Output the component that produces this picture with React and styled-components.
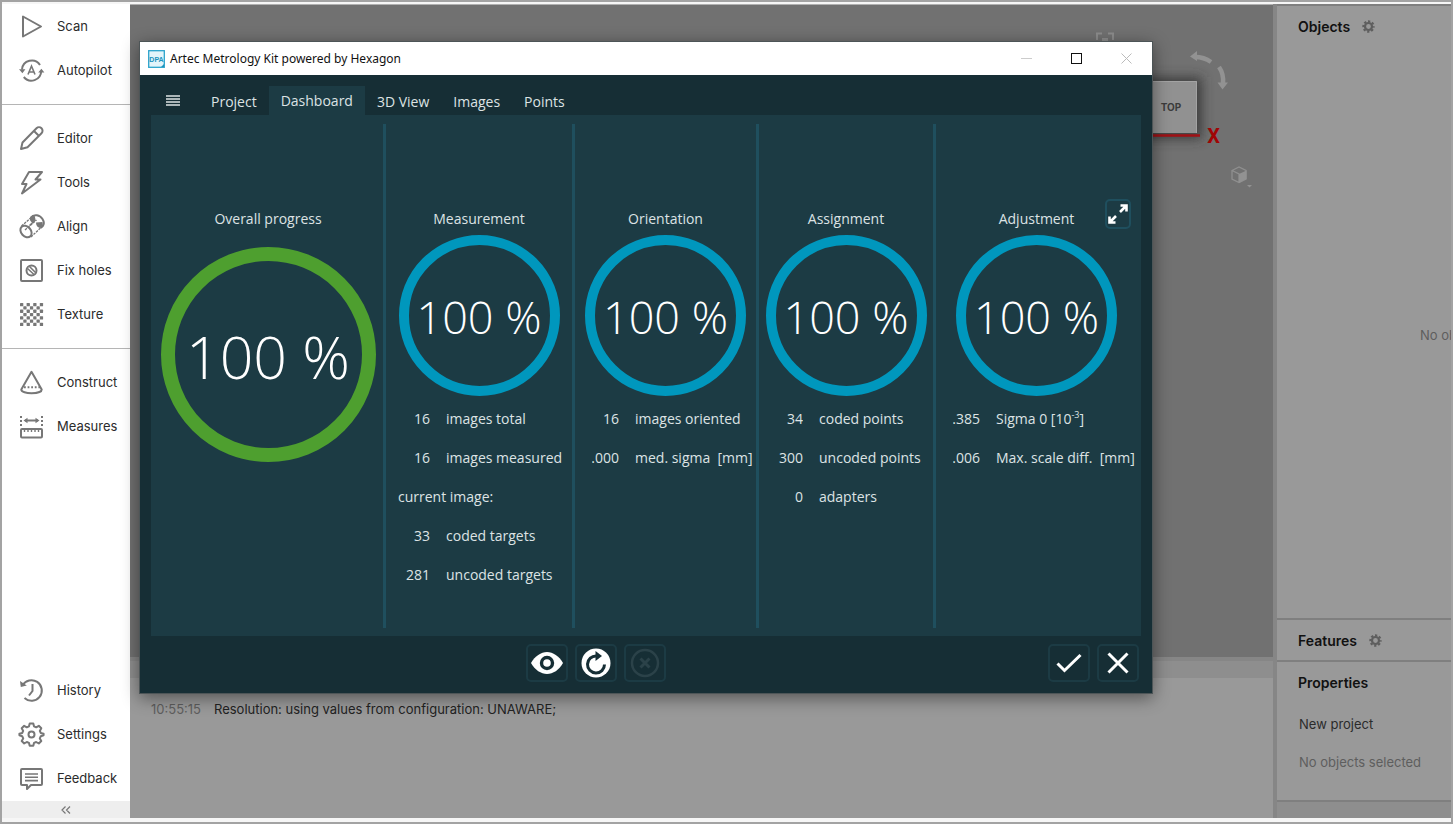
import React from 'react';
import styled, { createGlobalStyle } from 'styled-components'

const GlobalStyle = createGlobalStyle`
    * {
        box-sizing: border-box;
    }
    body {
        margin: 0;
        font-family: Inter, "Liberation Sans", sans-serif;
        font-size: 13px;
        color: #222;
    }
    button {
        font: inherit;
        color: inherit;
        background: none;
        border: none;
        padding: 0;
        cursor: pointer;
    }
    svg {
        display: block;
        flex-shrink: 0;
    }
    h2, p {
        margin: 0;
        font-size: inherit;
        font-weight: inherit;
    }
`

const Frame = styled.div`
    position: relative;
    display: flex;
    height: 100vh;
    padding: 2px 0 4px;
    border: 2px solid #a3a3a3;
    background-color: #f6f6f6;
    overflow: hidden;
`

/* left menu */

const Sidebar = styled.nav`
    display: flex;
    flex-direction: column;
    flex-shrink: 0;
    width: 128px;
    background-color: white;
`

const MenuGroup = styled.div`
    display: flex;
    flex-direction: column;
    padding-bottom: 12px;
    margin-bottom: 11px;
    border-bottom: 1px solid #b5b5b5;
    &:nth-last-child(3){
        border-bottom: none;
        margin-bottom: auto;
    }
    &:nth-last-child(2){
        border-bottom: none;
        padding-bottom: 0;
        margin-bottom: 1px;
    }
`

const MenuItem = styled.button`
    display: flex;
    align-items: center;
    gap: 12px;
    height: 44px;
    padding-left: 16px;
    text-align: left;
    color: #2b2b2b;
    &:hover{
        background-color: #f2f2f2;
    }
`

const Collapse = styled.button`
    display: flex;
    justify-content: center;
    align-items: center;
    height: 17px;
    background-color: #eee;
    color: #777;
`

/* scene and log */

const Main = styled.main`
    display: flex;
    flex-direction: column;
    flex: 1;
    min-width: 0;
`

const Viewport = styled.section`
    position: relative;
    flex: 1;
    background-color: #717171;
    border-top: 1px solid #b0b0b0;
`

const NavCube = styled.svg`
    position: absolute;
    top: 20px;
    right: 13px;
`

const Log = styled.section`
    height: 161px;
    border-top: 4px solid #868686;
    background-color: #999;
`

const LogHeader = styled.div`
    height: 17px;
    background-color: #8e8e8e;
`

const LogRow = styled.p`
    display: flex;
    gap: 13px;
    padding: 21px 0 0 21px;
    line-height: 20px;
`

const LogTime = styled.time`
    color: #5e5e5e;
`

/* right column */

const SidePanels = styled.aside`
    display: flex;
    flex-direction: column;
    flex-shrink: 0;
    width: 178px;
    border-left: 4px solid #868686;
    background-color: #999;
    overflow: hidden;
    white-space: nowrap;
`

const Panel = styled.section`
    display: flex;
    flex-direction: column;
    flex: ${({ $grow }) => $grow ? 1 : 'none'};
    border-top: 2px solid #7f7f7f;
`

const PanelTitle = styled.h2`
    display: flex;
    align-items: center;
    gap: 12px;
    height: 40px;
    padding-left: 21px;
    font-size: 14px;
    font-weight: 600;
    color: #111;
`

const EmptyNote = styled.p`
    margin: auto 0;
    padding: 6px 0 0 143px;
    color: #5e5e5e;
`

const PanelText = styled.p`
    height: 38px;
    padding-left: 22px;
    line-height: 44px;
    color: ${({ $muted }) => $muted ? '#5e5e5e' : '#2b2b2b'};
`

const PanelFoot = styled.div`
    height: 18px;
    margin-top: 22px;
    border-top: 2px solid #7f7f7f;
    background-color: #8e8e8e;
`

/* metrology window */

const Dialog = styled.div`
    position: absolute;
    top: 39px;
    right: 298px;
    bottom: 128px;
    left: 137px;
    display: flex;
    flex-direction: column;
    border: 1px solid #4d5557;
    background-color: #162e35;
    box-shadow: 0 4px 16px rgba(0, 0, 0, 0.45);
    font-family: "Open Sans", "Noto Sans", sans-serif;
    font-size: 14px;
    color: #dde3e4;
`

const TitleBar = styled.header`
    display: flex;
    align-items: center;
    height: 33px;
    padding: 0 1px 0 8px;
    background-color: white;
    color: #111;
`

const TitleText = styled.h2`
    flex: 1;
    margin-left: 5px;
    font-family: "Noto Sans", "Open Sans", sans-serif;
    font-size: 12px;
`

const WindowButton = styled.button`
    display: flex;
    justify-content: center;
    align-items: center;
    width: 50px;
    height: 33px;
`

const TabBar = styled.div`
    display: flex;
    align-items: flex-end;
    height: 40px;
    padding: 0 11px;
`

const MenuButton = styled.button`
    display: flex;
    justify-content: center;
    align-items: center;
    width: 44px;
    height: 29px;
    margin-right: 4px;
`

const Tab = styled.button`
    height: ${({ $active }) => $active ? 29 : 27}px;
    padding: 0 12px;
    background-color: ${({ $active }) => $active ? '#1c3b44' : 'transparent'};
`

const Dashboard = styled.div`
    display: grid;
    flex: 1;
    grid-template-columns: 232fr 189fr 184fr 177fr 208fr;
    margin: 0 11px;
    padding: 9px 0 8px;
    background-color: #1c3b44;
    white-space: nowrap;
`

const Column = styled.section`
    position: relative;
    display: flex;
    flex-direction: column;
    min-width: 0;
    padding-top: 84px;
    border-left: 3px solid #1f4f5e;
    &:first-child{
        padding-left: 2px;
        border-left: none;
    }
    &:last-child{
        padding-right: 4px;
    }
`

const ColumnTitle = styled.h2`
    text-align: center;
    line-height: 22px;
`

const Ring = styled.div`
    display: flex;
    justify-content: center;
    align-items: center;
    align-self: center;
    flex-shrink: 0;
    width: ${({ $large }) => $large ? 215 : 161}px;
    height: ${({ $large }) => $large ? 215 : 161}px;
    margin-top: ${({ $large }) => $large ? 17 : 5}px;
    padding-top: 2px;
    border: ${({ $large }) => $large ? '14px solid #4e9f2f' : '10px solid #0097bd'};
    border-radius: 50%;
    font-size: ${({ $large }) => $large ? 59 : 45}px;
    font-weight: 300;
    color: white;
`

const Stats = styled.dl`
    margin: 3px 0 0;
    padding-left: ${({ $indent }) => $indent}px;
`

const Stat = styled.div`
    display: flex;
    align-items: center;
    gap: 16px;
    height: 39px;
`

const Value = styled.dd`
    display: flex;
    justify-content: flex-end;
    width: ${({ $width }) => $width}px;
    margin: 0;
    overflow: hidden;
`

const Label = styled.dt`
    white-space: pre;
    sup {
        font-size: 9px;
        line-height: 0;
    }
`

const ExpandButton = styled.button`
    position: absolute;
    top: 75px;
    right: 10px;
    display: flex;
    justify-content: center;
    align-items: center;
    width: 26px;
    height: 30px;
    border: 2px solid #1f4f5e;
    border-radius: 5px;
`

const Footer = styled.footer`
    display: flex;
    gap: 7px;
    height: 57px;
    padding: 8px 13px 0 11px;
`

const FooterActions = styled.div`
    display: flex;
    justify-content: center;
    flex: 1;
    gap: 7px;
`

const FooterButton = styled.button`
    display: flex;
    justify-content: center;
    align-items: center;
    width: 42px;
    height: 38px;
    border: 2px solid #1c3b44;
    border-radius: 5px;
    color: white;
    &:disabled{
        color: #2b4249;
        cursor: default;
    }
`

const Icon = ({ children }) => (
    <svg width="27" height="27" viewBox="0 0 27 27" fill="none" stroke="#777" strokeWidth="2" aria-hidden="true">{children}</svg>
)

const ICONS = {
    Scan: <path d="M5 3.500v20l18-10z" strokeLinejoin="round" />,
    Autopilot: <>
        <path d="M4 12.500a9.800 9.800 0 0 1 18-4.500M23.200 14a9.800 9.800 0 0 1-17.400 6" />
        <path d="M1 12.200h6.400l-3 4zM20.200 15.500l3.200-3.800 3 3.800z" fill="#777" stroke="none" />
        <path d="M10 17.500l3.500-8.500 3.500 8.500M11 15h5" strokeWidth="1.600" />
    </>,
    Editor: <path d="M3 24l1.500-6.500L18.500 3.300a3.200 3.200 0 0 1 5 5L9.500 22.200zM16 6l4.800 4.800" strokeLinejoin="round" />,
    Tools: <path d="M11 3h13l-6.500 7.500h5L4 24.500l4.500-9.500H4z" strokeLinejoin="round" />,
    Align: <>
        <ellipse cx="8" cy="18.500" rx="4.800" ry="6.500" transform="rotate(-42 8 18.500)" />
        <path d="M3.500 13L15 3M13 24L24.500 13M7 17L18.500 7" strokeWidth="1.300" strokeDasharray="2.500 1" />
        <path d="M13 4.500c3-4 9-2.500 11.500 1.500s1 7-2 9" />
        <path d="M12 4.500c1-1.500 2.500-2.500 4.500-2.500l1 4.500-3 3.500c-2-1.500-3-3-2.500-5.500zM18 9.500l6.500-.5c.5 3-.5 5-2.500 6-2.500-.500-4-2.500-4-5.500z" fill="#777" stroke="none" />
        <path d="M11.500 12.500l6-5.500" strokeWidth="1.500" />
    </>,
    'Fix holes': <>
        <rect x="3" y="3" width="21" height="21" rx="1" />
        <circle cx="13.500" cy="13.500" r="5" />
        <path d="M9.500 11.500l6.500 6M11.500 9.500l6.500 6.500" strokeWidth="1.500" />
    </>,
    Texture: <g fill="#777" stroke="none">
        {[0, 1, 2, 3, 4, 5, 6].map(row => [0, 1, 2, 3, 4, 5, 6].map(col => (row + col) % 2 === 0 &&
            <rect key={`${row}-${col}`} x={2 + col * 3.3} y={2 + row * 3.3} width="3.300" height="3.300" rx=".6" />))}
    </g>,
    Construct: <>
        <path d="M3.300 20.500L13.500 2.800l10.200 17.700c0 5-20.400 5-20.400 0z" strokeLinejoin="round" />
        <path d="M6 18.300h16" strokeDasharray="1.800 1.800" />
    </>,
    Measures: <>
        <rect x="3" y="16" width="21" height="8.500" rx="1" />
        <path d="M6.500 16v3M10 16v3M13.500 16v3M17 16v3M20.500 16v3" strokeWidth="1.400" />
        <path d="M3 3v10M24 3v10" strokeDasharray="2 2" />
        <path d="M7 7.500h13" />
        <path d="M5.500 7.500l4-2.700v5.400zM21.500 7.500l-4-2.700v5.400z" fill="#777" stroke="none" />
    </>,
    History: <>
        <path d="M4.500 8.500a10.300 10.300 0 1 1 2 12.500" />
        <path d="M2 4l.8 6 6-1.500z" fill="#777" stroke="none" />
        <path d="M14.500 7v7l-3.500 4.500" />
    </>,
    Settings: <>
        <path d="M11.700 2.500h3.600l.7 2.800 2.200 1 2.600-1.500 2.500 2.500-1.500 2.600 1 2.100 2.800.7v1.600l-2.800.9-1 2.200 1.500 2.600-2.500 2.500-2.600-1.500-2.200.9-.7 2.900h-3.600l-.7-2.900-2.200-.9-2.600 1.500-2.500-2.500 1.500-2.600-1-2.200-2.800-.9v-1.600l2.800-.7 1-2.100-1.500-2.600 2.500-2.500 2.600 1.500 2.200-1z" strokeLinejoin="round" />
        <circle cx="13.500" cy="13.500" r="3" />
    </>,
    Feedback: <>
        <path d="M4 4h19q1 0 1 1v14q0 1-1 1H13l-4 4v-4H4q-1 0-1-1V5q0-1 1-1z" strokeLinejoin="round" />
        <path d="M7 9h13M7 12.300h13M7 15.600h13" strokeWidth="1.600" />
    </>,
}

const Gear = () => (
    <svg width="13" height="13" viewBox="0 0 13 13" fill="none" stroke="#5e5e5e" aria-hidden="true">
        <circle cx="6.500" cy="6.500" r="3.500" strokeWidth="2.200" />
        <circle cx="6.500" cy="6.500" r="5.200" strokeWidth="2" strokeDasharray="2.300 1.784" strokeDashoffset="1.150" />
    </svg>
)

const menu = [
    ['Scan', 'Autopilot'],
    ['Editor', 'Tools', 'Align', 'Fix holes', 'Texture'],
    ['Construct', 'Measures'],
    ['History', 'Settings', 'Feedback'],
]

const tabs = ['Project', 'Dashboard', '3D View', 'Images', 'Points']

const columns = [
    { title: 'Overall progress', large: true },
    {
        title: 'Measurement', indent: 12, width: 32, stats: [
            ['16', 'images total'],
            ['16', 'images measured'],
            [null, 'current image:'],
            ['33', 'coded targets'],
            ['281', 'uncoded targets'],
        ]
    },
    { title: 'Orientation', indent: 17, width: 27, stats: [['16', 'images oriented'], ['0.000', 'med. sigma  [mm]']] },
    { title: 'Assignment', indent: 17, width: 27, stats: [['34', 'coded points'], ['300', 'uncoded points'], ['0', 'adapters']] },
    { title: 'Adjustment', indent: 17, width: 27, stats: [['0.385', <>Sigma 0 [10<sup>-3</sup>]</>], ['0.006', 'Max. scale diff.  [mm]']] },
]

const SideMenu = () => (
    <Sidebar>
        {menu.map(group => (
            <MenuGroup key={group[0]}>
                {group.map(name => (
                    <MenuItem key={name} type="button"><Icon>{ICONS[name]}</Icon>{name}</MenuItem>
                ))}
            </MenuGroup>
        ))}
        <Collapse type="button" aria-label="Collapse menu">
            <svg width="10" height="8" viewBox="0 0 10 8" fill="none" stroke="currentColor" strokeWidth="1.200"><path d="M4.500 .5L1 4l3.500 3.500M9 .5L5.500 4 9 7.500" /></svg>
        </Collapse>
    </Sidebar>
)

const Scene = () => (
    <Viewport>
        <NavCube width="170" height="170" viewBox="0 0 170 170" aria-label="View cube">
            <defs>
                <filter id="soft" x="-30%" y="-30%" width="160%" height="160%"><feGaussianBlur stdDeviation="6" /></filter>
            </defs>
            <path d="M7 15V8.500h5M18 8.500h5V15" fill="none" stroke="#8c8c8c" strokeWidth="2" />
            <rect x="12" y="13" width="6" height="5" fill="#8c8c8c" />
            <rect x="48" y="52" width="64" height="62" fill="#303030" opacity=".8" filter="url(#soft)" />
            <rect x="50" y="56" width="57" height="52" fill="#919191" />
            <path d="M50 56.500h56.500V108" fill="none" stroke="#a3a3a3" />
            <text x="81" y="86" textAnchor="middle" fontSize="10" fontWeight="700" fill="#3c3c3c">TOP</text>
            <path d="M50 110.500h60" stroke="#a01015" strokeWidth="2.500" />
            <text x="123.500" y="118" textAnchor="middle" fontFamily="Roboto" fontSize="20" fontWeight="700" fill="#a00505">X</text>
            <path d="M105 32q9 0 16 5M129 42q5 7 4 17" fill="none" stroke="#929292" strokeWidth="4.500" />
            <path d="M100 31.500l7-5.500v10zM127.500 57.500h10.500l-5.500 7z" fill="#929292" />
            <path d="M142 145.500l7-3.500 7 3.500v8.500l-7 3.500-7-3.500zM142 145.500l7 3.500v8" fill="none" stroke="#8f8f8f" strokeWidth="1.300" />
            <path d="M149 149l7.500-3.500v8.500l-7.500 4z" fill="#929292" />
            <path d="M157 160h5l-2.500 2.500z" fill="#929292" />
        </NavCube>
    </Viewport>
)

const Window = () => (
    <Dialog role="dialog" aria-labelledby="window-title">
        <TitleBar>
            <svg width="17" height="18" viewBox="0 0 17 18" aria-hidden="true">
                <rect x=".7" y=".7" width="15.600" height="16.600" fill="#e3f4fa" stroke="#2ba3cb" strokeWidth="1.300" />
                <text x="8.500" y="11.500" textAnchor="middle" fontFamily="Liberation Sans" fontSize="7" fontWeight="700" fill="#1d93bd">DPA</text>
                <path d="M16 14v3h-3z" fill="#1d93bd" />
            </svg>
            <TitleText id="window-title">Artec Metrology Kit powered by Hexagon</TitleText>
            <WindowButton type="button" aria-label="Minimize"><svg width="11" height="11"><path d="M0 5.500h11" stroke="#ccc" /></svg></WindowButton>
            <WindowButton type="button" aria-label="Maximize"><svg width="11" height="11"><rect x=".5" y=".5" width="10" height="10" fill="none" stroke="#111" /></svg></WindowButton>
            <WindowButton type="button" aria-label="Close"><svg width="11" height="11"><path d="M.5 .5l10 10M10.500 .5l-10 10" stroke="#bbb" /></svg></WindowButton>
        </TitleBar>
        <TabBar>
            <MenuButton type="button" aria-label="Menu">
                <svg width="14" height="11" stroke="#dde3e4" strokeWidth="1.500"><path d="M0 1h14M0 4h14M0 7h14M0 10h14" /></svg>
            </MenuButton>
            {tabs.map(name => <Tab key={name} type="button" $active={name === 'Dashboard'}>{name}</Tab>)}
        </TabBar>
        <Dashboard>
            {columns.map(({ title, large, indent, width, stats }) => (
                <Column key={title}>
                    <ColumnTitle>{title}</ColumnTitle>
                    <Ring $large={large}>100 %</Ring>
                    {stats && <Stats $indent={indent}>
                        {stats.map(([value, label], i) => (
                            <Stat key={i}>
                                {value && <Value $width={width}><span>{value}</span></Value>}
                                <Label>{label}</Label>
                            </Stat>
                        ))}
                    </Stats>}
                    {title === 'Adjustment' && <ExpandButton type="button" aria-label="Expand">
                        <svg width="22" height="22" viewBox="0 0 22 22" fill="none" stroke="white" strokeWidth="2.600">
                            <path d="M13 9l6-6M13.500 2.500h6v6M9 13l-6 6M2.500 13.500v6h6" />
                        </svg>
                    </ExpandButton>}
                </Column>
            ))}
        </Dashboard>
        <Footer>
            <FooterActions>
                <FooterButton type="button" aria-label="Show">
                    <svg width="32" height="22" viewBox="0 0 32 22">
                        <path d="M0 11C4 4 10 0 16 0s12 4 16 11c-4 7-10 11-16 11S4 18 0 11z" fill="white" />
                        <circle cx="16" cy="11" r="5.500" fill="white" stroke="#162e35" strokeWidth="3.400" />
                    </svg>
                </FooterButton>
                <FooterButton type="button" aria-label="Repeat">
                    <svg width="30" height="30" viewBox="0 0 30 30">
                        <circle cx="15" cy="15" r="14.500" fill="white" />
                        <path d="M15.500 8A8.500 8.500 0 1 0 23.500 16.500" fill="none" stroke="#162e35" strokeWidth="3" />
                        <path d="M14.500 3v10l6.500-5z" fill="#162e35" />
                    </svg>
                </FooterButton>
                <FooterButton type="button" aria-label="Cancel" disabled>
                    <svg width="30" height="30" viewBox="0 0 30 30" fill="none" stroke="currentColor">
                        <circle cx="15" cy="15" r="13" strokeWidth="2.500" />
                        <path d="M10.500 10.500l9 9M19.500 10.500l-9 9" strokeWidth="3" />
                    </svg>
                </FooterButton>
            </FooterActions>
            <FooterButton type="button" aria-label="Apply">
                <svg width="26" height="20" viewBox="0 0 26 20" fill="none" stroke="currentColor" strokeWidth="3"><path d="M1.500 10.500l7 7L24.500 2" /></svg>
            </FooterButton>
            <FooterButton type="button" aria-label="Discard">
                <svg width="22" height="22" viewBox="0 0 22 22" fill="none" stroke="currentColor" strokeWidth="3"><path d="M1.500 1.500l19 19M20.500 1.500l-19 19" /></svg>
            </FooterButton>
        </Footer>
    </Dialog>
)

const App = () => {
    return (
        <>
            <GlobalStyle />
            <Frame>
                <SideMenu />
                <Main>
                    <Scene />
                    <Log>
                        <LogHeader />
                        <LogRow><LogTime>10:55:15</LogTime><span>Resolution: using values from configuration: UNAWARE;</span></LogRow>
                    </Log>
                </Main>
                <SidePanels>
                    <Panel $grow>
                        <PanelTitle>Objects <Gear /></PanelTitle>
                        <EmptyNote>No objects</EmptyNote>
                    </Panel>
                    <Panel>
                        <PanelTitle>Features <Gear /></PanelTitle>
                    </Panel>
                    <Panel>
                        <PanelTitle>Properties</PanelTitle>
                        <PanelText>New project</PanelText>
                        <PanelText $muted>No objects selected</PanelText>
                        <PanelFoot />
                    </Panel>
                </SidePanels>
                <Window />
            </Frame>
        </>
    )
}

export default App
